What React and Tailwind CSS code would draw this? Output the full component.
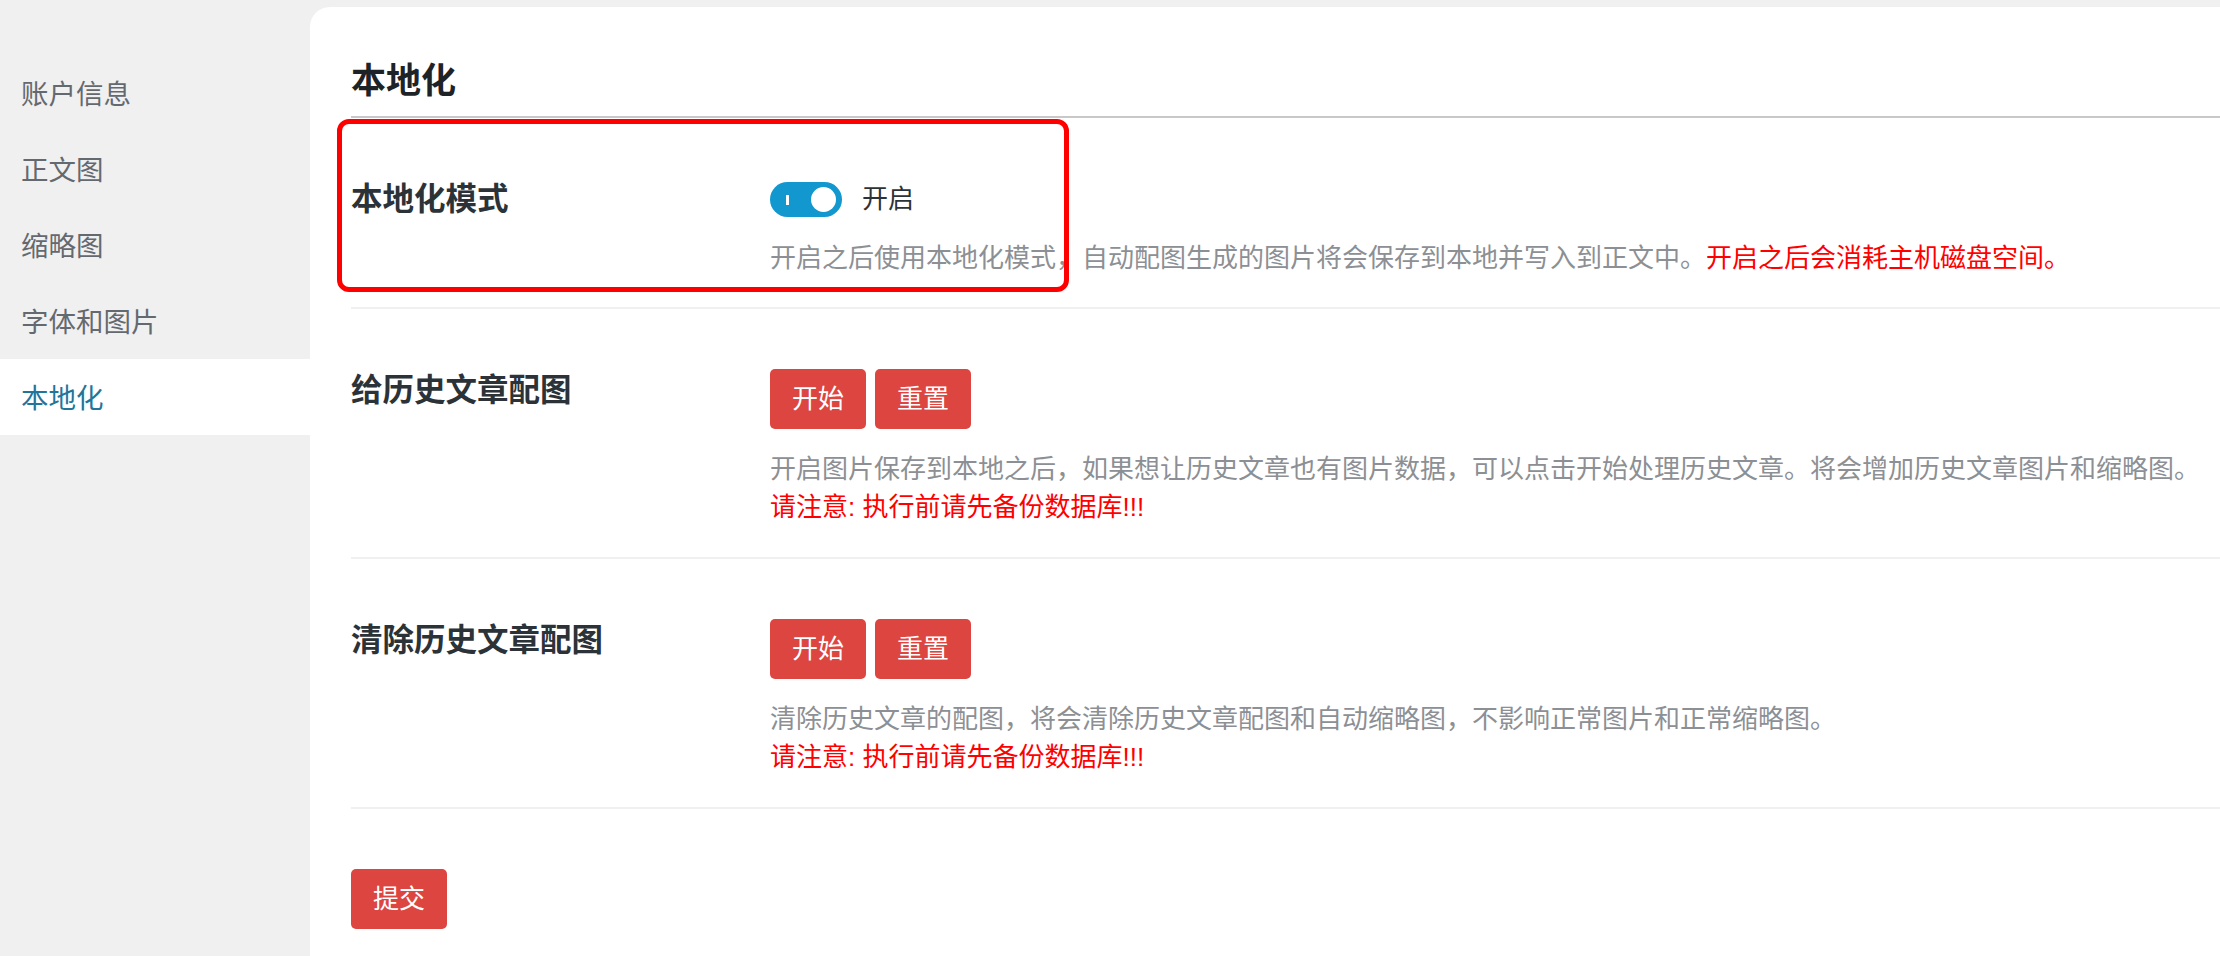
import { useState } from "react";

const menu = ["账户信息", "正文图", "缩略图", "字体和图片", "本地化"];

const Toggle = ({ on, onChange }) => (
  <button
    onClick={() => onChange(!on)}
    className={`relative w-[72px] h-[35px] rounded-full ${on ? "bg-[#1397cf]" : "bg-[#c3c4c7]"}`}
  >
    <span className="absolute left-[16px] top-[13px] w-[3px] h-[10px] bg-white" />
    <span
      className={`absolute top-[5px] w-[25px] h-[25px] rounded-full bg-white ${on ? "right-[6px]" : "left-[6px]"}`}
    />
  </button>
);

const ActionButtons = () => (
  <div className="flex gap-[9px]">
    <button className="w-[96px] h-[60px] rounded-[5px] bg-[#dd4540] text-white text-[26px]">开始</button>
    <button className="w-[96px] h-[60px] rounded-[5px] bg-[#dd4540] text-white text-[26px]">重置</button>
  </div>
);

const Row = ({ label, children }) => (
  <div className="relative flex border-b-2 border-[#f0f0f0]">
    <div className="w-[419px] shrink-0 pt-[61px] leading-[40px] text-[31.5px] font-semibold text-[#2c3338]">
      {label}
    </div>
    <div className="flex-1">{children}</div>
  </div>
);

const App = () => {
  const [active, setActive] = useState(4);
  const [localMode, setLocalMode] = useState(true);

  return (
    <div className="flex min-h-screen bg-[#f0f0f0] font-['Liberation_Sans','Noto_Sans_CJK_SC',sans-serif]">
      {/* Sidebar */}
      <aside className="w-[310px] shrink-0 pt-[55px]">
        {menu.map((item, index) => (
          <div
            key={item}
            onClick={() => setActive(index)}
            className={`h-[76px] flex items-center pl-[21px] pt-[3px] text-[27.5px] cursor-pointer ${
              active === index ? "bg-white text-[#21759b]" : "text-[#646970]"
            }`}
          >
            {item}
          </div>
        ))}
      </aside>

      {/* Panel */}
      <main className="flex-1 mt-[7px] bg-white rounded-tl-[20px] pl-[41px] pt-[49px] pb-[20px]">
        <h2 className="text-[35px] leading-[48px] pt-[1px] h-[48px] font-bold text-[#1d2327]">本地化</h2>
        <div className="mt-[12px] h-[2px] bg-[#c8c8c8]" />

        <Row label="本地化模式">
          <div className="pt-[64px] pb-[30px]">
            <div className="flex items-center h-[35px] gap-[20px]">
              <Toggle on={localMode} onChange={setLocalMode} />
              <span className="text-[26px] text-[#2c3338]">{localMode ? "开启" : "关闭"}</span>
            </div>
            <p className="mt-[22px] leading-[38px] text-[26px] text-[#8c8f94] whitespace-nowrap">
              开启之后使用本地化模式，自动配图生成的图片将会保存到本地并写入到正文中。
              <span className="text-[#ff0000]">开启之后会消耗主机磁盘空间。</span>
            </p>
          </div>
          {/* highlight */}
          <div className="absolute left-[-14px] top-[1px] w-[732px] h-[173px] border-[5px] border-[#ff0000] rounded-[12px] pointer-events-none" />
        </Row>

        <Row label="给历史文章配图">
          <div className="pt-[60px] pb-[31px]">
            <ActionButtons />
            <div className="mt-[21px] leading-[38px] text-[26px] whitespace-nowrap">
              <p className="text-[#8c8f94]">
                开启图片保存到本地之后，如果想让历史文章也有图片数据，可以点击开始处理历史文章。将会增加历史文章图片和缩略图。
              </p>
              <p className="text-[#ff0000]">请注意: 执行前请先备份数据库!!!</p>
            </div>
          </div>
        </Row>

        <Row label="清除历史文章配图">
          <div className="pt-[60px] pb-[31px]">
            <ActionButtons />
            <div className="mt-[21px] leading-[38px] text-[26px] whitespace-nowrap">
              <p className="text-[#8c8f94]">
                清除历史文章的配图，将会清除历史文章配图和自动缩略图，不影响正常图片和正常缩略图。
              </p>
              <p className="text-[#ff0000]">请注意: 执行前请先备份数据库!!!</p>
            </div>
          </div>
        </Row>

        <div className="pt-[60px]">
          <button className="w-[96px] h-[60px] rounded-[5px] bg-[#dd4540] text-white text-[26px]">提交</button>
        </div>
      </main>
    </div>
  );
};

export default App;
